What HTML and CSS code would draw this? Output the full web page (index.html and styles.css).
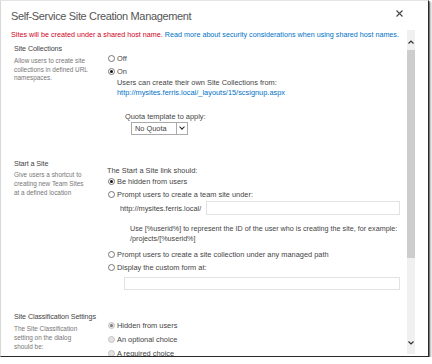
FILE: index.html
```html
<!DOCTYPE html>
<html lang="en">
<head>
  <meta charset="UTF-8" />
  <title>Self-Service Site Creation Management</title>
  <link rel="stylesheet" href="styles.css">
</head>
<body>
  <div class="dialog">
    <div class="dlg-head">
      <h1 class="dlg-title">Self-Service Site Creation Management</h1>
      <svg class="dlg-close" width="7" height="7" viewBox="0 0 7 7"><path d="M0.5 0.5 L6.5 6.5 M6.5 0.5 L0.5 6.5" stroke="#444" stroke-width="1.1" fill="none"/></svg>
    </div>

    <div class="dlg-body">
      <div class="dlg-content">
        <p class="warn"><span class="warn-red">Sites will be created under a shared host name.</span> <a href="#">Read more about security considerations when using shared host names.</a></p>

        <!-- site collections -->
        <section class="row row-sc">
          <div class="row-label">
            <h3>Site Collections</h3>
            <p>Allow users to create site<br>collections in defined URL<br>namespaces.</p>
          </div>
          <div class="row-field">
            <label class="opt"><span class="radio"></span>Off</label>
            <label class="opt"><span class="radio checked"></span>On</label>
            <div class="sub">
              <p>Users can create their own Site Collections from:</p>
              <a href="#">http://mysites.ferris.local/_layouts/15/scsignup.aspx</a>
            </div>
            <div class="quota">
              <p>Quota template to apply:</p>
              <div class="select"><span>No Quota</span><span class="select-btn"></span></div>
            </div>
          </div>
        </section>

        <!-- start a site -->
        <section class="row row-start">
          <div class="row-label">
            <h3>Start a Site</h3>
            <p>Give users a shortcut to<br>creating new Team Sites<br>at a defined location</p>
          </div>
          <div class="row-field">
            <p class="lead">The Start a Site link should:</p>
            <label class="opt"><span class="radio checked"></span>Be hidden from users</label>
            <label class="opt"><span class="radio"></span>Prompt users to create a team site under:</label>
            <div class="url-line">
              <span>http://mysites.ferris.local/</span>
              <span class="input"></span>
            </div>
            <p class="hint">Use [%userid%] to represent the ID of the user who is creating the site, for example:<br>/projects/[%userid%]</p>
            <label class="opt"><span class="radio"></span>Prompt users to create a site collection under any managed path</label>
            <label class="opt"><span class="radio"></span>Display the custom form at:</label>
            <span class="input input-form"></span>
          </div>
        </section>

        <!-- site classification -->
        <section class="row row-class">
          <div class="row-label">
            <h3>Site Classification Settings</h3>
            <p>The Site Classification<br>setting on the dialog<br>should be:</p>
          </div>
          <div class="row-field">
            <label class="opt"><span class="radio disabled checked"></span>Hidden from users</label>
            <label class="opt"><span class="radio disabled"></span>An optional choice</label>
            <label class="opt"><span class="radio disabled"></span>A required choice</label>
          </div>
        </section>
      </div>

      <div class="scrollbar">
        <span class="sb-arrow sb-up"><svg width="6" height="4" viewBox="0 0 6 4"><path d="M0.5 3.5 L3 1 L5.5 3.5" stroke="#333" stroke-width="1.2" fill="none"/></svg></span>
        <div class="sb-track"><div class="sb-thumb"></div></div>
        <span class="sb-arrow sb-down"><svg width="6" height="4" viewBox="0 0 6 4"><path d="M0.5 0.5 L3 3 L5.5 0.5" stroke="#333" stroke-width="1.2" fill="none"/></svg></span>
      </div>
    </div>
  </div>
</body>
</html>
```

FILE: styles.css
```css
html, body {
  margin: 0;
  padding: 0;
  background: #fff;
  font-family: 'Liberation Sans', Arial, sans-serif;
  color: #444;
}

.dialog {
  width: 429px;
  height: 357px;
  background: #fff;
  border-top: 1px solid #e4e4e4;
  border-left: 1px solid #d8d8d8;
  border-right: 1px solid #2a2a2a;
  border-bottom: 1px solid #2a2a2a;
  box-shadow: 1px 1px 0 rgba(0, 0, 0, 0.35), 2px 2px 2px rgba(0, 0, 0, 0.3);
  box-sizing: border-box;
  display: flex;
  flex-direction: column;
  overflow: hidden;
}

.dlg-head {
  display: flex;
  justify-content: space-between;
  align-items: flex-start;
  padding: 9px 25px 0 10px;
  height: 22px;
  box-sizing: border-box;
}
.dlg-title {
  margin: 0;
  font-size: 11px;
  line-height: 12px;
  font-weight: normal;
  color: #555;
  letter-spacing: -0.35px;
}

.dlg-body {
  flex: 1;
  display: flex;
  min-height: 0;
  padding-top: 7px;
}
.dlg-content {
  flex: 1;
  overflow: hidden;
  font-size: 7.4px;
  padding-left: 10px;
}

.warn {
  margin: 0;
  line-height: 10px;
  white-space: nowrap;
  font-size: 7.2px;
}
.warn-red {
  color: #d0021b;
}
a {
  color: #0072c6;
  text-decoration: none;
}

.row {
  display: flex;
}
.row-label {
  width: 78px;
  padding-left: 3px;
  flex-shrink: 0;
}
.row-label h3 {
  margin: 0;
  font-size: 7.2px;
  line-height: 10px;
  letter-spacing: -0.1px;
  font-weight: normal;
  color: #444;
  white-space: nowrap;
}
.row-label p {
  margin: 1px 0 0;
  font-size: 6.4px;
  line-height: 9px;
  color: #777;
  white-space: nowrap;
}
.row-field {
  flex: 1;
  padding-left: 19px;
}

.opt {
  display: flex;
  align-items: center;
  height: 13px;
  white-space: nowrap;
  margin-left: -3px;
}
.radio {
  width: 7px;
  height: 7px;
  border: 1px solid #777;
  border-radius: 50%;
  margin-right: 2px;
  box-sizing: border-box;
  position: relative;
  flex-shrink: 0;
}
.radio.checked::after {
  content: "";
  position: absolute;
  left: 1px;
  top: 1px;
  width: 3px;
  height: 3px;
  border-radius: 50%;
  background: #111;
}
.radio.disabled {
  border-color: #c4c4c4;
  background: #e2e2e2;
}
.radio.disabled.checked::after {
  background: #7a7a7a;
}

.row-sc {
  margin-top: 4px;
}
.row-sc .row-label p {
  margin-top: 3px;
  line-height: 8.5px;
}
.row-sc .row-field {
  padding-top: 8px;
}
.sub {
  padding-left: 6px;
  line-height: 10px;
}
.sub p {
  margin: 0;
}
.quota {
  padding-left: 14px;
  margin-top: 14px;
}
.quota p {
  margin: 0;
  line-height: 10px;
}
.select {
  margin-left: 6px;
  width: 57px;
  height: 13px;
  border: 1px solid #aaa;
  box-sizing: border-box;
  display: flex;
  align-items: center;
  justify-content: space-between;
  padding-left: 3px;
}
.select-btn {
  width: 10px;
  height: 11px;
  border-left: 1px solid #aaa;
  position: relative;
}
.select-btn::after {
  content: "";
  position: absolute;
  left: 2.5px;
  top: 2px;
  width: 3px;
  height: 3px;
  border-right: 1.5px solid #222;
  border-bottom: 1.5px solid #222;
  transform: rotate(45deg);
}

.row-start {
  margin-top: 24px;
}
.row-start .row-field {
  padding-top: 8px;
}
.lead {
  margin: 0 0 0 -4px;
  line-height: 8px;
}
.url-line {
  display: flex;
  align-items: center;
  padding-left: 9px;
}
.input {
  display: block;
  height: 14px;
  border: 1px solid #e2e2e2;
  box-sizing: border-box;
}
.url-line .input {
  flex: 1;
  margin-left: 5px;
  margin-right: 7px;
}
.hint {
  margin: 9px 0 4px;
  padding-left: 19px;
  line-height: 10px;
  white-space: nowrap;
  font-size: 7.2px;
}
.input-form {
  height: 13px;
  margin: 3px 7px 0 13px;
}

.row-class {
  margin-top: 22px;
}
.row-class .row-label p {
  margin-top: 2px;
}
.row-class .row-field {
  padding-top: 6px;
}
.row-class .opt {
  height: 14px;
}

.scrollbar {
  width: 8px;
  margin-right: 13px;
  margin-bottom: 2px;
  background: #f0f0f0;
  display: flex;
  flex-direction: column;
}
.sb-arrow {
  display: flex;
  justify-content: center;
}
.sb-up {
  height: 20px;
  padding-top: 10px;
  box-sizing: border-box;
}
.sb-down {
  height: 19px;
  padding-top: 6px;
  box-sizing: border-box;
}
.sb-track {
  flex: 1;
}
.sb-thumb {
  height: 208px;
  background: #cdcdcd;
}
```
